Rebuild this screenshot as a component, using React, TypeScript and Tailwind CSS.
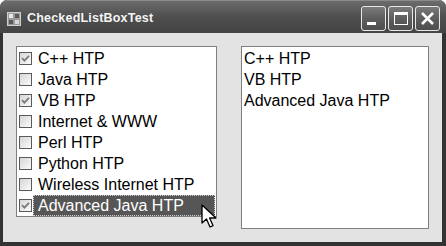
import React from "react"

const ITEMS = [
  { label: "C++ HTP", checked: true },
  { label: "Java HTP", checked: false },
  { label: "VB HTP", checked: true },
  { label: "Internet & WWW", checked: false },
  { label: "Perl HTP", checked: false },
  { label: "Python HTP", checked: false },
  { label: "Wireless Internet HTP", checked: false },
  { label: "Advanced Java HTP", checked: true },
]

const SELECTED = ITEMS.filter((i) => i.checked)

function CheckBox({ checked }: { checked: boolean }) {
  return (
    <div className="w-[13px] h-[13px] shrink-0 border border-[#5a5a5a] bg-gradient-to-br from-[#d6d6d6] to-[#fbfbfb] flex items-center justify-center">
      {checked && (
        <svg width="9" height="9" viewBox="0 0 9 9">
          <path d="M1 4.2 L3.4 6.6 L8 1.8" fill="none" stroke="#7a7a7a" strokeWidth="1.8" />
        </svg>
      )}
    </div>
  )
}

function TitleButton({ children }: { children: React.ReactNode }) {
  return (
    <div className="w-[25px] h-[25px] rounded-[3px] border border-[#e8e8e8] bg-gradient-to-b from-[#7a7a7a] via-[#5e5e5e] to-[#4e4e4e] flex items-center justify-center">
      {children}
    </div>
  )
}

export default function App() {
  return (
    <div
      className="relative w-[446px] h-[246px] bg-[#333333] rounded-t-[7px] flex flex-col overflow-hidden"
      style={{ fontFamily: "'Liberation Sans', Arial, sans-serif" }}
    >
      {/* title bar */}
      <div className="h-[33px] shrink-0 flex items-center bg-gradient-to-b from-[#6c6c6c] via-[#4e4e4e] to-[#444444] border-t border-[#8a8a8a] rounded-t-[7px] pl-[7px] pr-[6px]">
        <svg width="14" height="14" viewBox="0 0 14 14" className="shrink-0 mt-[4px]">
          <rect x="0.5" y="0.5" width="13" height="13" fill="#9a9a9a" stroke="#d0d0d0" />
          <rect x="2" y="2" width="4" height="4" fill="#e8e8e8" />
          <rect x="8" y="2" width="4" height="4" fill="#5a5a5a" />
          <rect x="2" y="8" width="4" height="4" fill="#5a5a5a" />
          <rect x="8" y="8" width="4" height="4" fill="#d8d8d8" />
        </svg>
        <span className="ml-[6px] mt-[3px] text-[12.5px] font-bold text-[#f4f4f4] tracking-[0.2px]">CheckedListBoxTest</span>
        <div className="ml-auto flex gap-[2px] mt-[2px]">
          <TitleButton>
            <div className="w-[9px] h-[3px] bg-white mt-[11px] -ml-[5px]" />
          </TitleButton>
          <TitleButton>
            <div className="w-[14px] h-[13px] border border-white border-t-[3px]" />
          </TitleButton>
          <TitleButton>
            <svg width="15" height="15" viewBox="0 0 15 15">
              <path d="M2 2 L13 13 M13 2 L2 13" stroke="white" strokeWidth="2.6" />
            </svg>
          </TitleButton>
        </div>
      </div>

      {/* client */}
      <div className="ml-[3px] mr-[4px] h-[209px] bg-[#e3e3e3] flex items-start gap-[24px] pl-[13px] pt-[13px]">
        <div className="w-[201px] h-[171px] bg-white border border-[#7f7f7f] pt-[1px] pr-[1px] text-[16px] text-black">
          {ITEMS.map((item, i) => {
            const sel = i === ITEMS.length - 1
            return (
              <div key={item.label} className="h-[21px] flex items-center pl-[2px]">
                <CheckBox checked={item.checked} />
                <div
                  className={
                    sel
                      ? "ml-[1px] flex-1 h-[21px] flex items-center pl-[4px] bg-[#565656] text-white border border-dotted border-[#cfcfcf]"
                      : "ml-[6px] flex-1 h-[21px] flex items-center"
                  }
                >
                  {item.label}
                </div>
              </div>
            )
          })}
        </div>
        <div className="w-[188px] h-[183px] bg-white border border-[#7f7f7f] pt-[1px] pl-[2px] text-[16px] text-black">
          {SELECTED.map((item) => (
            <div key={item.label} className="h-[21px] flex items-center">
              {item.label}
            </div>
          ))}
        </div>
      </div>

      {/* mouse cursor */}
      <svg width="18" height="25" viewBox="0 0 18 25" className="absolute left-[201px] top-[204px]">
        <path
          d="M1 1 L1 19 L5.5 15 L9 23 L12 21.6 L8.6 14 L15 14 Z"
          fill="white"
          stroke="black"
          strokeWidth="1.3"
          strokeLinejoin="round"
        />
      </svg>
    </div>
  )
}
